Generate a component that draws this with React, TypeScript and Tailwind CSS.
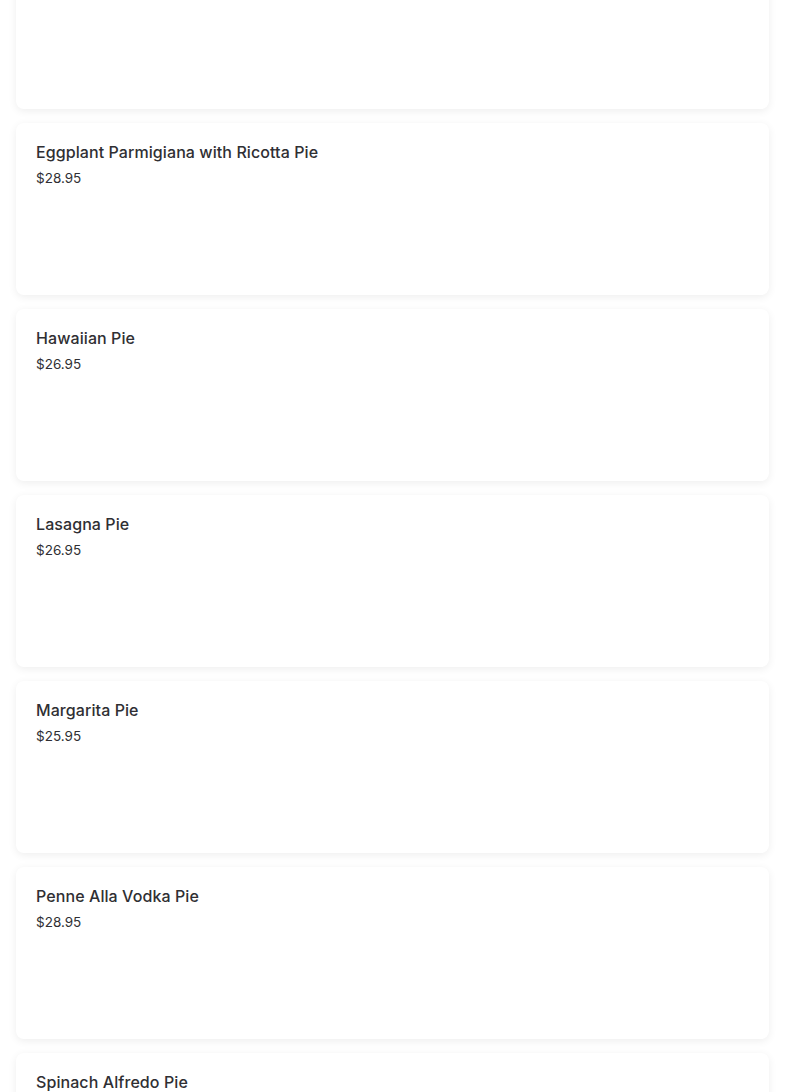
import React from 'react';

interface Item {
  name: string;
  price: string;
}

const items: Item[] = [
  { name: 'Eggplant Parmigiana with Ricotta Pie', price: '$28.95' },
  { name: 'Hawaiian Pie', price: '$26.95' },
  { name: 'Lasagna Pie', price: '$26.95' },
  { name: 'Margarita Pie', price: '$25.95' },
  { name: 'Penne Alla Vodka Pie', price: '$28.95' },
  { name: 'Spinach Alfredo Pie', price: '$28.95' },
];

function Card({ item }: { item?: Item }) {
  return (
    <div className="h-[172px] rounded-lg bg-white px-5 pt-[17px] shadow-[0_2px_8px_rgba(0,0,0,0.07)]">
      {item && (
        <>
          <h3 className="text-[16px] font-medium leading-6 tracking-[0.005em] text-[#2f2f33]">{item.name}</h3>
          <p className="mt-1 text-[13.5px] leading-5 text-[#2f2f33]">{item.price}</p>
        </>
      )}
    </div>
  );
}

export default function App() {
  return (
    <div className="h-[1092px] overflow-hidden bg-white font-['Inter',sans-serif]">
      <div className="-mt-[63px] flex flex-col gap-[14px] px-4">
        <Card />
        {items.map((item) => (
          <Card key={item.name} item={item} />
        ))}
      </div>
    </div>
  );
}
